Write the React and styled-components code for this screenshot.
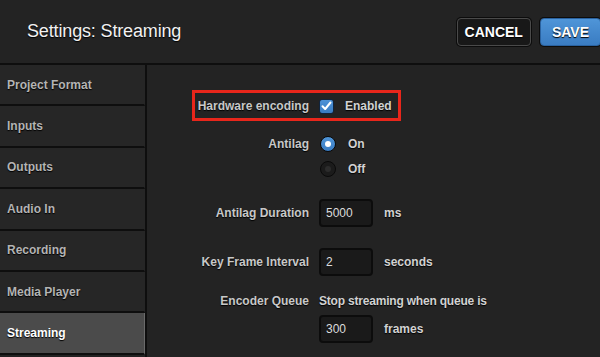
import styled, { createGlobalStyle } from 'styled-components'

const GlobalStyle = createGlobalStyle`
    html, body {
        margin: 0;
        padding: 0;
        background: #222;
    }
    body {
        font-family: "Liberation Sans", Arial, sans-serif;
    }
`

const menu = ['Project Format', 'Inputs', 'Outputs', 'Audio In', 'Recording', 'Media Player', 'Streaming']

function App() {
    return (
        <Page>
            <GlobalStyle />
            <Header>
                <Title>Settings: Streaming</Title>
                <ButtonBox>
                    <HeadButton>CANCEL</HeadButton>
                    <HeadButton $primary>SAVE</HeadButton>
                </ButtonBox>
            </Header>
            <Body>
                <Sidebar>
                    {menu.map((item) => (
                        <MenuItem key={item} $active={item === 'Streaming'}>{item}</MenuItem>
                    ))}
                </Sidebar>
                <Content>
                    <Row $top={27}>
                        <Highlight />
                        <Label>Hardware encoding</Label>
                        <Check>
                            <svg width="11" height="10" viewBox="0 0 11 10">
                                <path d="M1.5 5.2 L4.2 8 L9.5 1.5" fill="none" stroke="#fff" strokeWidth="2" strokeLinecap="round" strokeLinejoin="round" />
                            </svg>
                        </Check>
                        <Text>Enabled</Text>
                    </Row>
                    <Row $top={14} $h={20}>
                        <Label>Antilag</Label>
                        <Radio $on />
                        <Text>On</Text>
                    </Row>
                    <Row $top={5} $h={20}>
                        <Label />
                        <Radio />
                        <Text>Off</Text>
                    </Row>
                    <Row $top={20}>
                        <Label>Antilag Duration</Label>
                        <Input>5000</Input>
                        <Text>ms</Text>
                    </Row>
                    <Row $top={21}>
                        <Label>Key Frame Interval</Label>
                        <Input>2</Input>
                        <Text>seconds</Text>
                    </Row>
                    <Row $top={17} $h={16}>
                        <Label>Encoder Queue</Label>
                        <Text $tight>Stop streaming when queue is</Text>
                    </Row>
                    <Row $top={6}>
                        <Label />
                        <Input>300</Input>
                        <Text>frames</Text>
                    </Row>
                </Content>
            </Body>
        </Page>
    )
}

const Page = styled.div`
    width: 600px;
    height: 357px;
    overflow: hidden;
    background: #222;
    display: flex;
    flex-direction: column;
`

const Header = styled.div`
    height: 63px;
    flex-shrink: 0;
    border-bottom: 2px solid #0e0e0e;
    display: flex;
    align-items: center;
    justify-content: space-between;
    padding-left: 27px;
    background: #232323;
`

const Title = styled.h1`
    margin: 0;
    font-size: 18px;
    font-weight: normal;
    color: #f2f2f2;
    text-shadow: 0 1px 1px #000;
    letter-spacing: -0.15px;
`

const ButtonBox = styled.div`
    display: flex;
    gap: 9px;
    margin-right: -1px;
`

const HeadButton = styled.button`
    height: 28px;
    padding: 0 ${props => props.$primary ? '11px' : '7px'};
    font-family: inherit;
    font-size: 14px;
    font-weight: bold;
    color: #fff;
    text-shadow: 0 1px 1px #000;
    border-radius: 4px;
    border: 1px solid ${props => props.$primary ? '#2a62a0' : '#4a4a4a'};
    background: ${props => props.$primary ? 'linear-gradient(#4f95d8, #3a7cc2)' : '#181818'};
    box-shadow: 0 0 0 1px #0c0c0c;
`

const Body = styled.div`
    flex: 1;
    display: flex;
    min-height: 0;
`

const Sidebar = styled.div`
    width: 145px;
    flex-shrink: 0;
    border-right: 2px solid #0e0e0e;
    display: flex;
    flex-direction: column;
`

const MenuItem = styled.div`
    height: 39.4px;
    flex-shrink: 0;
    border-bottom: 2px solid #0e0e0e;
    box-sizing: content-box;
    display: flex;
    align-items: center;
    padding-left: 7px;
    font-size: 12px;
    font-weight: bold;
    color: ${props => props.$active ? '#fff' : '#b4b4b4'};
    text-shadow: 0 1px 1px #000;
    background: ${props => props.$active ? '#4b4b4b' : '#262626'};
    border-right: 1px solid ${props => props.$active ? '#6a6a6a' : '#262626'};
`

const Content = styled.div`
    flex: 1;
    background: #232323;
    display: flex;
    flex-direction: column;
`

const Row = styled.div`
    position: relative;
    height: ${props => props.$h || 28}px;
    margin-top: ${props => props.$top}px;
    display: flex;
    align-items: center;
    gap: 10px;
    flex-shrink: 0;
`

const Highlight = styled.span`
    position: absolute;
    left: 45px;
    top: -2px;
    width: 209px;
    height: 31px;
    box-sizing: border-box;
    border: 3px solid #e8261b;
    pointer-events: none;
`

const Label = styled.div`
    width: 162px;
    flex-shrink: 0;
    text-align: right;
    font-size: 12px;
    font-weight: bold;
    color: #c8c8c8;
    text-shadow: 0 1px 1px #000;
`

const Text = styled.span`
    font-size: 12px;
    font-weight: bold;
    color: #d2d2d2;
    text-shadow: 0 1px 1px #000;
    letter-spacing: ${props => props.$tight ? '-0.2px' : '0'};
`

const Check = styled.span`
    width: 15px;
    height: 15px;
    box-sizing: border-box;
    border-radius: 3px;
    border: 1px solid #10243d;
    background: linear-gradient(#4d92d6, #3a7cc2);
    display: flex;
    align-items: center;
    justify-content: center;
    margin-right: 1px;
`

const Radio = styled.span`
    width: 16px;
    height: 16px;
    box-sizing: border-box;
    border-radius: 50%;
    border: 1px solid #0a0a0a;
    background: ${props => props.$on ? 'linear-gradient(#4f95d8, #3a7cc2)' : '#1b1b1b'};
    display: flex;
    align-items: center;
    justify-content: center;
    margin-left: 1px;
    margin-right: 2px;
    &::after {
        content: '';
        width: 6px;
        height: 6px;
        border-radius: 50%;
        background: ${props => props.$on ? '#fff' : '#2c2c2c'};
    }
`

const Input = styled.div`
    width: 54px;
    height: 28px;
    box-sizing: border-box;
    border: 2px solid #0c0c0c;
    border-radius: 4px;
    background: #1a1a1a;
    display: flex;
    align-items: center;
    padding-left: 5px;
    font-size: 12px;
    color: #dcdcdc;
    margin-right: 1px;
`

export default App
